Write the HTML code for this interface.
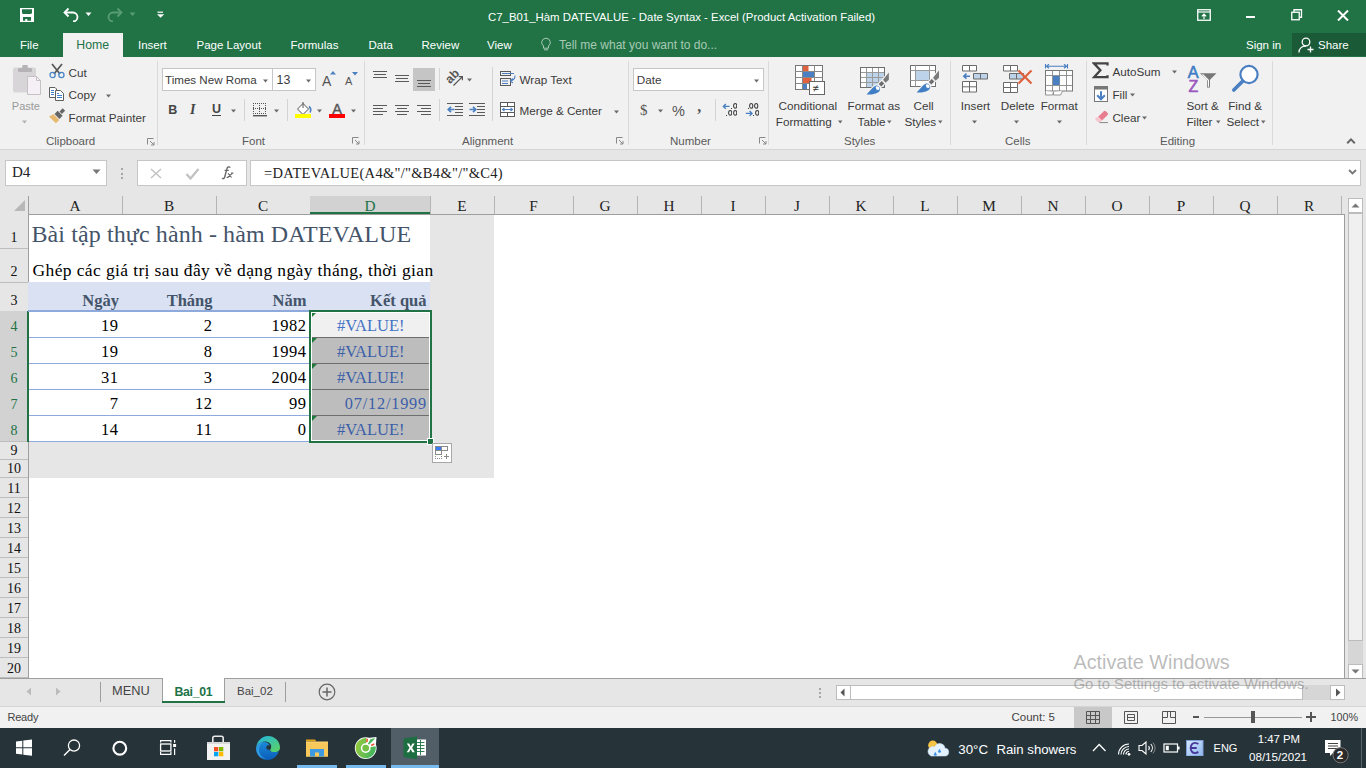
<!DOCTYPE html>
<html><head><meta charset="utf-8"><title>Excel</title>
<style>
html,body{margin:0;padding:0;width:1366px;height:768px;overflow:hidden;background:#fff;}
body{position:relative;font-family:'Liberation Sans', sans-serif;}
body>div,body>svg{position:absolute;box-sizing:border-box;}
.t{white-space:nowrap;line-height:1;}
</style></head><body>
<div style="left:0px;top:0px;width:1366px;height:57px;background:#217346"></div>
<div style="left:63px;top:33px;width:60px;height:24px;background:#f1f1f1"></div>
<div style="left:1292px;top:33px;width:74px;height:23px;background:#1a5a36"></div>
<svg style="left:20px;top:8px;" width="14" height="14" viewBox="0 0 14 14"><path fill-rule="evenodd" fill="#fff" d="M0 0h14v14H0z M2 1.3h10v3.6l-1 1H3l-1-1z M3 9h8v3.8H7.3v-1.9h-2v1.9H3z"/></svg>
<svg style="left:62px;top:6px;" width="18" height="16" viewBox="0 0 18 16"><path d="M3 6.5h8a4.5 4.5 0 0 1 0 9" fill="none" stroke="#fff" stroke-width="1.8"/><path d="M6.5 2.5L2.5 6.5 6.5 10.5" fill="none" stroke="#fff" stroke-width="1.8"/></svg>
<svg style="left:85px;top:12px;" width="8" height="5" viewBox="0 0 8 5"><path d="M0.5 0.5h6l-3 3.5z" fill="#fff"/></svg>
<svg style="left:106px;top:6px;" width="18" height="16" viewBox="0 0 18 16"><path d="M15 6.5H7a4.5 4.5 0 0 0 0 9" fill="none" stroke="#5a9c75" stroke-width="1.8"/><path d="M11.5 2.5l4 4-4 4" fill="none" stroke="#5a9c75" stroke-width="1.8"/></svg>
<svg style="left:129px;top:12px;" width="8" height="5" viewBox="0 0 8 5"><path d="M0.5 0.5h6l-3 3.5z" fill="#5a9c75"/></svg>
<svg style="left:156px;top:11px;" width="9" height="8" viewBox="0 0 9 8"><rect x="1.5" y="0.6" width="5.5" height="1.2" fill="#fff"/><path d="M1 3.2h7.2L4.6 6.8z" fill="#fff"/></svg>
<div class="t" style="left:488px;top:11.85px;font-size:11.4px;color:#fff;font-family:'Liberation Sans', sans-serif;font-weight:400;">C7_B01_Hàm DATEVALUE - Date Syntax - Excel (Product Activation Failed)</div>
<svg style="left:1197px;top:9px;" width="15" height="12" viewBox="0 0 15 12"><rect x="0.75" y="0.75" width="12.5" height="10.5" fill="none" stroke="#fff" stroke-width="1.3"/><path d="M1 3h12" stroke="#fff" stroke-width="1.2"/><path d="M7 10V5.2M4.8 7.3L7 5l2.2 2.3" fill="none" stroke="#fff" stroke-width="1.2"/></svg>
<div style="left:1246px;top:16px;width:9px;height:1.5px;background:#fff"></div>
<svg style="left:1291px;top:9px;" width="12" height="12" viewBox="0 0 12 12"><rect x="0.75" y="3.25" width="7.5" height="7.5" fill="none" stroke="#fff" stroke-width="1.3"/><path d="M3 3V0.75h7.5v7.5H8.5" fill="none" stroke="#fff" stroke-width="1.3"/></svg>
<svg style="left:1337px;top:10px;" width="12" height="11" viewBox="0 0 12 11"><path d="M1 0.5l10 10M11 0.5l-10 10" stroke="#fff" stroke-width="2"/></svg>
<div class="t" style="left:20px;top:40.27px;font-size:11.5px;color:#fff;font-family:'Liberation Sans', sans-serif;font-weight:400;">File</div>
<div class="t" style="left:138px;top:40.27px;font-size:11.5px;color:#fff;font-family:'Liberation Sans', sans-serif;font-weight:400;">Insert</div>
<div class="t" style="left:196.5px;top:40.27px;font-size:11.5px;color:#fff;font-family:'Liberation Sans', sans-serif;font-weight:400;">Page Layout</div>
<div class="t" style="left:290.5px;top:40.27px;font-size:11.5px;color:#fff;font-family:'Liberation Sans', sans-serif;font-weight:400;">Formulas</div>
<div class="t" style="left:368.5px;top:40.27px;font-size:11.5px;color:#fff;font-family:'Liberation Sans', sans-serif;font-weight:400;">Data</div>
<div class="t" style="left:421.5px;top:40.27px;font-size:11.5px;color:#fff;font-family:'Liberation Sans', sans-serif;font-weight:400;">Review</div>
<div class="t" style="left:487px;top:40.27px;font-size:11.5px;color:#fff;font-family:'Liberation Sans', sans-serif;font-weight:400;">View</div>
<div class="t" style="left:76.3px;top:39.49px;font-size:12.3px;color:#217346;font-family:'Liberation Sans', sans-serif;font-weight:400;">Home</div>
<svg style="left:540px;top:37px;" width="12" height="15" viewBox="0 0 12 15"><path d="M6 1.2a4.3 4.3 0 0 0-2.5 7.8v2.2h5V9A4.3 4.3 0 0 0 6 1.2z" fill="none" stroke="#a8c9b4" stroke-width="1"/><path d="M4 12.8h4" stroke="#a8c9b4"/></svg>
<div class="t" style="left:559px;top:39.34px;font-size:12px;color:#a8c9b4;font-family:'Liberation Sans', sans-serif;font-weight:400;">Tell me what you want to do...</div>
<div class="t" style="left:1246px;top:39.77px;font-size:11.5px;color:#fff;font-family:'Liberation Sans', sans-serif;font-weight:400;">Sign in</div>
<svg style="left:1298px;top:37px;" width="17" height="16" viewBox="0 0 17 16"><circle cx="8" cy="5" r="3.8" fill="none" stroke="#fff" stroke-width="1.3"/><path d="M1 15.5c0-4 3-6.5 7-6.5" fill="none" stroke="#fff" stroke-width="1.3"/><path d="M12.5 9.5v6M9.5 12.5h6" stroke="#fff" stroke-width="1.3"/></svg>
<div class="t" style="left:1318px;top:39.77px;font-size:11.5px;color:#fff;font-family:'Liberation Sans', sans-serif;font-weight:400;">Share</div>
<div style="left:0px;top:57px;width:1366px;height:93px;background:#f1f1f1"></div>
<div style="left:0px;top:149px;width:1366px;height:1px;background:#d5d5d5"></div>
<div style="left:157px;top:61px;width:1px;height:84px;background:#d9d9d9"></div>
<div style="left:364px;top:61px;width:1px;height:84px;background:#d9d9d9"></div>
<div style="left:628px;top:61px;width:1px;height:84px;background:#d9d9d9"></div>
<div style="left:768px;top:61px;width:1px;height:84px;background:#d9d9d9"></div>
<div style="left:950px;top:61px;width:1px;height:84px;background:#d9d9d9"></div>
<div style="left:1086px;top:61px;width:1px;height:84px;background:#d9d9d9"></div>
<div style="left:1272px;top:61px;width:1px;height:84px;background:#d9d9d9"></div>
<svg style="left:12px;top:64px;" width="30" height="32" viewBox="0 0 30 32"><path d="M1 5.5a2 2 0 0 1 2-2h19a2 2 0 0 1 2 2v23H3a2 2 0 0 1-2-2z" fill="#d8d5d9"/><rect x="6" y="4" width="14" height="4" rx="1" fill="#b6b3b6"/><rect x="10.3" y="1" width="5.5" height="4" rx="1" fill="#b6b3b6"/><path d="M15.5 12.5h9l4 4v14h-13z" fill="#f4f0f6" stroke="#c4c0c4"/><path d="M24.5 12.5v4h4" fill="none" stroke="#c4c0c4"/></svg>
<div class="t" style="left:11.8px;top:101.19px;font-size:11px;color:#9a9a9a;font-family:'Liberation Sans', sans-serif;font-weight:400;">Paste</div>
<svg style="left:21.5px;top:120px;" width="6" height="4" viewBox="0 0 6 4"><path d="M0 0.5h5l-2.5 3z" fill="#b0b0b0"/></svg>
<svg style="left:49px;top:63px;" width="16" height="16" viewBox="0 0 16 16"><path d="M3 1l8 10M13 1L5 11" stroke="#5a5a5a" stroke-width="1.8"/><circle cx="3.6" cy="12" r="2.6" fill="none" stroke="#4a86c8" stroke-width="1.3"/><circle cx="12.4" cy="12" r="2.6" fill="none" stroke="#4a86c8" stroke-width="1.3"/></svg>
<div class="t" style="left:68.5px;top:66.60px;font-size:11.7px;color:#3b3b3b;font-family:'Liberation Sans', sans-serif;font-weight:400;">Cut</div>
<svg style="left:48px;top:86px;" width="17" height="16" viewBox="0 0 17 16"><path d="M1.5 1.5H7L8.5 3v8.5h-7z" fill="#fff" stroke="#5f5f5f"/><path d="M7.5 4.5h5l3 3v7h-8z" fill="#fff" stroke="#5f5f5f"/><path d="M3 4.5h3M3 6.5h3M3 8.5h3M9 7.5h2M9 9.5h5M9 11.5h5" stroke="#3f7fcb"/></svg>
<div class="t" style="left:68.5px;top:88.90px;font-size:11.7px;color:#3b3b3b;font-family:'Liberation Sans', sans-serif;font-weight:400;">Copy</div>
<svg style="left:106px;top:93.5px;" width="6" height="4" viewBox="0 0 6 4"><path d="M0 0.5h5l-2.5 3z" fill="#6a6a6a"/></svg>
<svg style="left:48px;top:108px;" width="18" height="17" viewBox="0 0 18 17"><path d="M0.99 8.44L5.57 6.22 11.23 11.88 7.91 15.36z" fill="#e8b86e"/><path d="M6.5 6.01L11.44 10.95 14.62 7.77 9.68 2.83z" fill="#666"/><path d="M11.52 3.53L13.92 5.93 17.1 2.75 14.7 0.35z" fill="#666"/></svg>
<div class="t" style="left:68.5px;top:112.10px;font-size:11.7px;color:#3b3b3b;font-family:'Liberation Sans', sans-serif;font-weight:400;">Format Painter</div>
<svg style="left:147px;top:138px;" width="8" height="8" viewBox="0 0 8 8"><path d="M0.5 6.5v-6h6" fill="none" stroke="#888"/><path d="M3 3l4 4M7 4v3H4" fill="none" stroke="#888"/></svg>
<div style="left:162px;top:68px;width:111px;height:23px;background:#fff;border:1px solid #c6c6c6"></div>
<div class="t" style="left:165px;top:74.08px;font-size:11.6px;color:#3b3b3b;font-family:'Liberation Sans', sans-serif;font-weight:400;">Times New Roma</div>
<svg style="left:263px;top:78.5px;" width="6" height="4" viewBox="0 0 6 4"><path d="M0 0.5h5l-2.5 3z" fill="#6a6a6a"/></svg>
<div style="left:272px;top:68px;width:44px;height:23px;background:#fff;border:1px solid #c6c6c6"></div>
<div class="t" style="left:276.5px;top:74.00px;font-size:12.4px;color:#3b3b3b;font-family:'Liberation Sans', sans-serif;font-weight:400;">13</div>
<svg style="left:306px;top:78.5px;" width="6" height="4" viewBox="0 0 6 4"><path d="M0 0.5h5l-2.5 3z" fill="#6a6a6a"/></svg>
<div class="t" style="left:322px;top:73.65px;font-size:14px;color:#555;font-family:'Liberation Sans', sans-serif;font-weight:400;">A</div>
<svg style="left:329.5px;top:71px;" width="6" height="4" viewBox="0 0 6 4"><path d="M0 3.5L3 0l3 3.5z" fill="#4a7fc1"/></svg>
<div class="t" style="left:345px;top:76.19px;font-size:11px;color:#555;font-family:'Liberation Sans', sans-serif;font-weight:400;">A</div>
<svg style="left:351.5px;top:71.5px;" width="6" height="4" viewBox="0 0 6 4"><path d="M0 0h6L3 3.5z" fill="#4a7fc1"/></svg>
<div class="t" style="left:168.3px;top:103.92px;font-size:12.5px;color:#444;font-family:'Liberation Sans', sans-serif;font-weight:700;">B</div>
<div class="t" style="left:190px;top:102.98px;font-size:14px;color:#444;font-family:'Liberation Serif', serif;font-weight:700;font-style:italic">I</div>
<div class="t" style="left:212px;top:103.12px;font-size:12.5px;color:#444;font-family:'Liberation Sans', sans-serif;font-weight:700;">U</div>
<div style="left:212px;top:115px;width:9px;height:1.3px;background:#444"></div>
<svg style="left:230.5px;top:109px;" width="6" height="4" viewBox="0 0 6 4"><path d="M0 0.5h5l-2.5 3z" fill="#6a6a6a"/></svg>
<div style="left:244px;top:99px;width:1px;height:22px;background:#d4d4d4"></div>
<svg style="left:253px;top:103px;" width="14" height="14" viewBox="0 0 14 14"><rect x="0" y="0" width="1" height="1" fill="#555"/><rect x="0" y="2" width="1" height="1" fill="#555"/><rect x="0" y="4" width="1" height="1" fill="#555"/><rect x="0" y="5" width="1" height="1" fill="#555"/><rect x="0" y="6" width="1" height="1" fill="#555"/><rect x="0" y="8" width="1" height="1" fill="#555"/><rect x="0" y="10" width="1" height="1" fill="#555"/><rect x="2" y="0" width="1" height="1" fill="#555"/><rect x="2" y="5" width="1" height="1" fill="#555"/><rect x="2" y="10" width="1" height="1" fill="#555"/><rect x="4" y="0" width="1" height="1" fill="#555"/><rect x="4" y="5" width="1" height="1" fill="#555"/><rect x="4" y="10" width="1" height="1" fill="#555"/><rect x="6" y="0" width="1" height="1" fill="#555"/><rect x="6" y="2" width="1" height="1" fill="#555"/><rect x="6" y="4" width="1" height="1" fill="#555"/><rect x="6" y="5" width="1" height="1" fill="#555"/><rect x="6" y="6" width="1" height="1" fill="#555"/><rect x="6" y="8" width="1" height="1" fill="#555"/><rect x="6" y="10" width="1" height="1" fill="#555"/><rect x="8" y="0" width="1" height="1" fill="#555"/><rect x="8" y="5" width="1" height="1" fill="#555"/><rect x="8" y="10" width="1" height="1" fill="#555"/><rect x="10" y="0" width="1" height="1" fill="#555"/><rect x="10" y="5" width="1" height="1" fill="#555"/><rect x="10" y="10" width="1" height="1" fill="#555"/><rect x="12" y="0" width="1" height="1" fill="#555"/><rect x="12" y="2" width="1" height="1" fill="#555"/><rect x="12" y="4" width="1" height="1" fill="#555"/><rect x="12" y="5" width="1" height="1" fill="#555"/><rect x="12" y="6" width="1" height="1" fill="#555"/><rect x="12" y="8" width="1" height="1" fill="#555"/><rect x="12" y="10" width="1" height="1" fill="#555"/><rect x="0" y="12" width="14" height="1.4" fill="#555"/></svg>
<svg style="left:274px;top:109px;" width="6" height="4" viewBox="0 0 6 4"><path d="M0 0.5h5l-2.5 3z" fill="#6a6a6a"/></svg>
<div style="left:287px;top:99px;width:1px;height:22px;background:#d4d4d4"></div>
<svg style="left:294px;top:101px;" width="19" height="18" viewBox="0 0 19 18"><path d="M9 2.5l5.5 5.5-5.5 5.5-5.5-5.5z" fill="#fff" stroke="#555"/><path d="M9 1v6" stroke="#555"/><path d="M15 5.5c2 1.5 2 4 1 6" fill="none" stroke="#4a7fc1" stroke-width="1.6"/><rect x="1" y="13" width="16" height="4" fill="#ffff00"/></svg>
<svg style="left:317px;top:109px;" width="6" height="4" viewBox="0 0 6 4"><path d="M0 0.5h5l-2.5 3z" fill="#6a6a6a"/></svg>
<div class="t" style="left:332.3px;top:102.43px;font-size:14.5px;color:#555;font-family:'Liberation Sans', sans-serif;font-weight:400;-webkit-text-stroke:0.4px #555">A</div>
<div style="left:329px;top:114px;width:16px;height:4px;background:#ff0000"></div>
<svg style="left:351px;top:109px;" width="6" height="4" viewBox="0 0 6 4"><path d="M0 0.5h5l-2.5 3z" fill="#6a6a6a"/></svg>
<svg style="left:352px;top:137px;" width="8" height="8" viewBox="0 0 8 8"><path d="M0.5 6.5v-6h6" fill="none" stroke="#888"/><path d="M3 3l4 4M7 4v3H4" fill="none" stroke="#888"/></svg>
<div style="left:373px;top:71px;width:14px;height:1.2px;background:#5a5a5a"></div>
<div style="left:374.2px;top:74px;width:11.6px;height:1.2px;background:#5a5a5a"></div>
<div style="left:373px;top:77px;width:14px;height:1.2px;background:#5a5a5a"></div>
<div style="left:395px;top:75px;width:14px;height:1.2px;background:#5a5a5a"></div>
<div style="left:396.2px;top:78px;width:11.6px;height:1.2px;background:#5a5a5a"></div>
<div style="left:395px;top:81px;width:14px;height:1.2px;background:#5a5a5a"></div>
<div style="left:413px;top:68px;width:22px;height:23px;background:#c5c5c5"></div>
<div style="left:417px;top:80px;width:14px;height:1.2px;background:#5a5a5a"></div>
<div style="left:418.2px;top:83px;width:11.6px;height:1.2px;background:#5a5a5a"></div>
<div style="left:417px;top:86px;width:14px;height:1.2px;background:#5a5a5a"></div>
<div style="left:439px;top:68px;width:1px;height:22px;background:#d4d4d4"></div>
<svg style="left:446px;top:69px;" width="19" height="18" viewBox="0 0 19 18"><text x="0" y="0" transform="translate(4,15.2) rotate(-45)" font-family="Liberation Sans" font-size="12.3" font-weight="700" fill="#555">ab</text><path d="M7.5 16.5L16.2 7.8M12.8 7.6H16.4v3.6" fill="none" stroke="#555" stroke-width="1.2"/></svg>
<svg style="left:467px;top:77.8px;" width="6" height="4" viewBox="0 0 6 4"><path d="M0 0.5h5l-2.5 3z" fill="#6a6a6a"/></svg>
<div style="left:373px;top:105px;width:14px;height:1.2px;background:#5a5a5a"></div>
<div style="left:373px;top:108px;width:10px;height:1.2px;background:#5a5a5a"></div>
<div style="left:373px;top:111px;width:14px;height:1.2px;background:#5a5a5a"></div>
<div style="left:373px;top:114px;width:10px;height:1.2px;background:#5a5a5a"></div>
<div style="left:395px;top:105px;width:14px;height:1.2px;background:#5a5a5a"></div>
<div style="left:397px;top:108px;width:10px;height:1.2px;background:#5a5a5a"></div>
<div style="left:395px;top:111px;width:14px;height:1.2px;background:#5a5a5a"></div>
<div style="left:397px;top:114px;width:10px;height:1.2px;background:#5a5a5a"></div>
<div style="left:417px;top:105px;width:14px;height:1.2px;background:#5a5a5a"></div>
<div style="left:421px;top:108px;width:10px;height:1.2px;background:#5a5a5a"></div>
<div style="left:417px;top:111px;width:14px;height:1.2px;background:#5a5a5a"></div>
<div style="left:421px;top:114px;width:10px;height:1.2px;background:#5a5a5a"></div>
<div style="left:439px;top:99px;width:1px;height:22px;background:#d4d4d4"></div>
<div style="left:447px;top:103px;width:16px;height:1.2px;background:#5a5a5a"></div>
<div style="left:455px;top:106px;width:8px;height:1.2px;background:#5a5a5a"></div>
<div style="left:455px;top:109px;width:8px;height:1.2px;background:#5a5a5a"></div>
<div style="left:455px;top:112px;width:8px;height:1.2px;background:#5a5a5a"></div>
<div style="left:447px;top:115px;width:16px;height:1.2px;background:#5a5a5a"></div>
<svg style="left:447px;top:106px;" width="8" height="7" viewBox="0 0 8 7"><path d="M7.5 3.5H2M4 0.8L1.2 3.5 4 6.2" fill="none" stroke="#4a7fc1" stroke-width="1.7"/></svg>
<div style="left:469px;top:103px;width:16px;height:1.2px;background:#5a5a5a"></div>
<div style="left:477px;top:106px;width:8px;height:1.2px;background:#5a5a5a"></div>
<div style="left:477px;top:109px;width:8px;height:1.2px;background:#5a5a5a"></div>
<div style="left:477px;top:112px;width:8px;height:1.2px;background:#5a5a5a"></div>
<div style="left:469px;top:115px;width:16px;height:1.2px;background:#5a5a5a"></div>
<svg style="left:469px;top:106px;" width="8" height="7" viewBox="0 0 8 7"><path d="M0.5 3.5H6M4 0.8l2.8 2.7L4 6.2" fill="none" stroke="#4a7fc1" stroke-width="1.7"/></svg>
<div style="left:492px;top:67px;width:1px;height:54px;background:#d4d4d4"></div>
<svg style="left:499px;top:70px;" width="18" height="17" viewBox="0 0 18 17"><rect x="1.5" y="1.5" width="10" height="4" fill="none" stroke="#5a5a5a"/><path d="M3 3.5h12" stroke="#4a7fc1" stroke-width="1"/><rect x="1.5" y="8.5" width="10" height="7" fill="none" stroke="#5a5a5a"/><path d="M3 11h6M3 13.5h6" stroke="#4a7fc1" stroke-width="1"/><path d="M16 5.5c0 3-1.8 5-4.5 5.3M13.8 8.5l-2.3 2.3 2.3 2.2" fill="none" stroke="#4a7fc1" stroke-width="1.1"/></svg>
<div class="t" style="left:519.5px;top:74.30px;font-size:11.7px;color:#3b3b3b;font-family:'Liberation Sans', sans-serif;font-weight:400;">Wrap Text</div>
<svg style="left:499px;top:101px;" width="17" height="17" viewBox="0 0 17 17"><rect x="1.5" y="1.5" width="14" height="14" fill="#fff" stroke="#5a5a5a"/><path d="M1.5 5.5h14M1.5 11.5h14M8.5 1.5v4M8.5 11.5v4" stroke="#5a5a5a"/><path d="M3.5 8.5h10M5.5 6.8L3.5 8.5l2 1.7M11.5 6.8l2 1.7-2 1.7" fill="none" stroke="#4a7fc1" stroke-width="1.1"/></svg>
<div class="t" style="left:519.5px;top:105.00px;font-size:11.7px;color:#3b3b3b;font-family:'Liberation Sans', sans-serif;font-weight:400;">Merge &amp; Center</div>
<svg style="left:614px;top:109.5px;" width="6" height="4" viewBox="0 0 6 4"><path d="M0 0.5h5l-2.5 3z" fill="#6a6a6a"/></svg>
<svg style="left:616px;top:137px;" width="8" height="8" viewBox="0 0 8 8"><path d="M0.5 6.5v-6h6" fill="none" stroke="#888"/><path d="M3 3l4 4M7 4v3H4" fill="none" stroke="#888"/></svg>
<div style="left:633px;top:68px;width:131px;height:23px;background:#fff;border:1px solid #c6c6c6"></div>
<div class="t" style="left:636.7px;top:74.30px;font-size:11.7px;color:#3b3b3b;font-family:'Liberation Sans', sans-serif;font-weight:400;">Date</div>
<svg style="left:754px;top:78.5px;" width="6" height="4" viewBox="0 0 6 4"><path d="M0 0.5h5l-2.5 3z" fill="#6a6a6a"/></svg>
<div class="t" style="left:640px;top:103.44px;font-size:15px;color:#555;font-family:'Liberation Serif', serif;font-weight:400;">$</div>
<svg style="left:658px;top:109px;" width="6" height="4" viewBox="0 0 6 4"><path d="M0 0.5h5l-2.5 3z" fill="#6a6a6a"/></svg>
<div class="t" style="left:672px;top:104.03px;font-size:14.5px;color:#555;font-family:'Liberation Sans', sans-serif;font-weight:400;">%</div>
<div class="t" style="left:697.3px;top:98.60px;font-size:16px;color:#555;font-family:'Liberation Serif', serif;font-weight:700;">,</div>
<div style="left:715px;top:99px;width:1px;height:22px;background:#d4d4d4"></div>
<svg style="left:722px;top:103px;" width="9" height="7" viewBox="0 0 9 7"><path d="M7.5 3.4H1.5M3.8 1.1L1.4 3.4l2.4 2.3" fill="none" stroke="#4a7fc1" stroke-width="1.4"/></svg>
<div style="left:731px;top:107.7px;width:1.2px;height:1.2px;background:#444"></div>
<svg style="left:732.6px;top:103.10000000000001px;" width="4.4" height="6" viewBox="0 0 4.4 6"><ellipse cx="2.2" cy="2.9" rx="1.6" ry="2.35" fill="none" stroke="#444" stroke-width="1.1"/></svg>
<div style="left:726px;top:114.7px;width:1.2px;height:1.2px;background:#444"></div>
<svg style="left:727.6px;top:110.10000000000001px;" width="4.4" height="6" viewBox="0 0 4.4 6"><ellipse cx="2.2" cy="2.9" rx="1.6" ry="2.35" fill="none" stroke="#444" stroke-width="1.1"/></svg>
<svg style="left:732.8000000000001px;top:110.10000000000001px;" width="4.4" height="6" viewBox="0 0 4.4 6"><ellipse cx="2.2" cy="2.9" rx="1.6" ry="2.35" fill="none" stroke="#444" stroke-width="1.1"/></svg>
<div style="left:747.6px;top:107.7px;width:1.2px;height:1.2px;background:#444"></div>
<svg style="left:749.2px;top:103.10000000000001px;" width="4.4" height="6" viewBox="0 0 4.4 6"><ellipse cx="2.2" cy="2.9" rx="1.6" ry="2.35" fill="none" stroke="#444" stroke-width="1.1"/></svg>
<svg style="left:754.4000000000001px;top:103.10000000000001px;" width="4.4" height="6" viewBox="0 0 4.4 6"><ellipse cx="2.2" cy="2.9" rx="1.6" ry="2.35" fill="none" stroke="#444" stroke-width="1.1"/></svg>
<svg style="left:744.5px;top:109.8px;" width="9" height="7" viewBox="0 0 9 7"><path d="M0.8 3.4h6M4.6 1.1l2.4 2.3-2.4 2.3" fill="none" stroke="#4a7fc1" stroke-width="1.4"/></svg>
<div style="left:753px;top:114.7px;width:1.2px;height:1.2px;background:#444"></div>
<svg style="left:754.6px;top:110.10000000000001px;" width="4.4" height="6" viewBox="0 0 4.4 6"><ellipse cx="2.2" cy="2.9" rx="1.6" ry="2.35" fill="none" stroke="#444" stroke-width="1.1"/></svg>
<svg style="left:759px;top:137px;" width="8" height="8" viewBox="0 0 8 8"><path d="M0.5 6.5v-6h6" fill="none" stroke="#888"/><path d="M3 3l4 4M7 4v3H4" fill="none" stroke="#888"/></svg>
<svg style="left:794px;top:64px;" width="32" height="32" viewBox="0 0 32 32"><rect x="1.5" y="1.5" width="27" height="24" fill="#fff" stroke="#777"/><path d="M1.5 7.5h27M1.5 13.5h27M1.5 19.5h27M8.5 1.5v24M20.5 1.5v24" stroke="#888"/><rect x="9" y="2" width="5.5" height="5" fill="#e0613d"/><rect x="9" y="8" width="11" height="5" fill="#4a7fc1"/><rect x="9" y="14" width="8.5" height="5" fill="#e0613d"/><rect x="9" y="20" width="4" height="5" fill="#4a7fc1"/><rect x="15.5" y="17.5" width="15" height="13" fill="#fff" stroke="#666"/><text x="18.5" y="28" font-family="Liberation Sans" font-size="11" fill="#333">≠</text></svg>
<div class="t" style="left:778.6px;top:100.40px;font-size:11.7px;color:#3b3b3b;font-family:'Liberation Sans', sans-serif;font-weight:400;">Conditional</div>
<div class="t" style="left:775.8px;top:116.20px;font-size:11.7px;color:#3b3b3b;font-family:'Liberation Sans', sans-serif;font-weight:400;">Formatting</div>
<svg style="left:838px;top:120px;" width="5.5" height="4" viewBox="0 0 5.5 4"><path d="M0 0.5h4.5l-2.25 3z" fill="#6a6a6a"/></svg>
<svg style="left:859px;top:66px;" width="32" height="32" viewBox="0 0 32 32"><rect x="1.5" y="1.5" width="24" height="20" fill="#fff" stroke="#777"/><rect x="7" y="7" width="18" height="14" fill="#bcd3ea"/><path d="M1.5 6.5h24M1.5 11.5h24M1.5 16.5h24M7.5 1.5v20M13.5 1.5v20M19.5 1.5v20" stroke="#999" stroke-width="1"/><rect x="1.5" y="1.5" width="24" height="20" fill="none" stroke="#6f6f6f"/><g transform="translate(17.7,23)"><path d="M-10.2 5.6C-7 2.5-4-1.5-2.4-2.4A3.4 3.4 0 0 1 2.4 2.4C0.5 4.5-5 5.8-10.2 5.6Z M2 -5L5 -8 7.5 -5.5 4.5 -2.5Z M6.3 -9.3L12.2 -16.5V-9.2L8.8 -6.2Z" fill="#f1f1f1" stroke="#f1f1f1" stroke-width="2.4" stroke-linejoin="round"/><path d="M-10.2 5.6C-7 2.5-4-1.5-2.4-2.4A3.4 3.4 0 0 1 2.4 2.4C0.5 4.5-5 5.8-10.2 5.6Z" fill="#3f7dc4"/><path d="M-1.2 -2.3A2.5 2.5 0 0 1 2.2 1.3L0.9 0.5 0.2 1.4Z" fill="#fff"/><path d="M2 -5L5 -8 7.5 -5.5 4.5 -2.5Z" fill="#6d6d6d"/><path d="M6.3 -9.3L12.2 -16.5V-9.2L8.8 -6.2Z" fill="#7a7a7a"/></g></svg>
<div class="t" style="left:847.5px;top:100.40px;font-size:11.7px;color:#3b3b3b;font-family:'Liberation Sans', sans-serif;font-weight:400;">Format as</div>
<div class="t" style="left:857.6px;top:116.20px;font-size:11.7px;color:#3b3b3b;font-family:'Liberation Sans', sans-serif;font-weight:400;">Table</div>
<svg style="left:886.5px;top:120px;" width="5.5" height="4" viewBox="0 0 5.5 4"><path d="M0 0.5h4.5l-2.25 3z" fill="#6a6a6a"/></svg>
<svg style="left:909px;top:64px;" width="32" height="32" viewBox="0 0 32 32"><rect x="1.5" y="1.5" width="25" height="21" fill="#fff" stroke="#6f6f6f"/><path d="M1.5 6.5h25M1.5 16.5h25M6.5 1.5v21M20.5 1.5v21" stroke="#999" stroke-width="1"/><rect x="7" y="7" width="13" height="9" fill="#bcd3ea"/><g transform="translate(17.8,23)"><path d="M-10.2 5.6C-7 2.5-4-1.5-2.4-2.4A3.4 3.4 0 0 1 2.4 2.4C0.5 4.5-5 5.8-10.2 5.6Z M2 -5L5 -8 7.5 -5.5 4.5 -2.5Z M6.3 -9.3L12.2 -16.5V-9.2L8.8 -6.2Z" fill="#f1f1f1" stroke="#f1f1f1" stroke-width="2.4" stroke-linejoin="round"/><path d="M-10.2 5.6C-7 2.5-4-1.5-2.4-2.4A3.4 3.4 0 0 1 2.4 2.4C0.5 4.5-5 5.8-10.2 5.6Z" fill="#3f7dc4"/><path d="M-1.2 -2.3A2.5 2.5 0 0 1 2.2 1.3L0.9 0.5 0.2 1.4Z" fill="#fff"/><path d="M2 -5L5 -8 7.5 -5.5 4.5 -2.5Z" fill="#6d6d6d"/><path d="M6.3 -9.3L12.2 -16.5V-9.2L8.8 -6.2Z" fill="#7a7a7a"/></g></svg>
<div class="t" style="left:913.5px;top:100.40px;font-size:11.7px;color:#3b3b3b;font-family:'Liberation Sans', sans-serif;font-weight:400;">Cell</div>
<div class="t" style="left:904.4px;top:116.20px;font-size:11.7px;color:#3b3b3b;font-family:'Liberation Sans', sans-serif;font-weight:400;">Styles</div>
<svg style="left:937.5px;top:120px;" width="5.5" height="4" viewBox="0 0 5.5 4"><path d="M0 0.5h4.5l-2.25 3z" fill="#6a6a6a"/></svg>
<svg style="left:961px;top:64px;" width="28" height="30" viewBox="0 0 28 30"><path d="M1.5 1.5h14v5.5h-14zM8.5 1.5v5.5" fill="#fff" stroke="#6a6a6a"/><path d="M12.5 9.5h14v5.5h-14zM19.5 9.5v5.5" fill="#bcd3ea" stroke="#6a6a6a"/><path d="M9 12.2H3M5.5 9.7L2.8 12.2l2.7 2.5" fill="none" stroke="#4a7fc1" stroke-width="1.6"/><path d="M1.5 17.5h14v10.5h-14zM1.5 22.8h14M8.5 17.5v10.5" fill="#fff" stroke="#6a6a6a"/></svg>
<div class="t" style="left:960.8px;top:99.90px;font-size:11.7px;color:#3b3b3b;font-family:'Liberation Sans', sans-serif;font-weight:400;">Insert</div>
<svg style="left:972px;top:120px;" width="6" height="4" viewBox="0 0 6 4"><path d="M0 0.5h5l-2.5 3z" fill="#6a6a6a"/></svg>
<svg style="left:1002px;top:64px;" width="32" height="30" viewBox="0 0 32 30"><path d="M1.5 1.5h14v5.5h-14zM8.5 1.5v5.5" fill="#fff" stroke="#6a6a6a"/><path d="M7.5 9.5h14v5.5h-14zM14.5 9.5v5.5" fill="#bcd3ea" stroke="#6a6a6a"/><path d="M1.5 18.5h14v10h-14zM1.5 23.5h14M8.5 18.5v10" fill="#fff" stroke="#6a6a6a"/><path d="M16.5 6.5l13 13M29.5 6.5l-13 13" stroke="#e0613d" stroke-width="2.2"/></svg>
<div class="t" style="left:1000.7px;top:99.90px;font-size:11.7px;color:#3b3b3b;font-family:'Liberation Sans', sans-serif;font-weight:400;">Delete</div>
<svg style="left:1014px;top:120px;" width="6" height="4" viewBox="0 0 6 4"><path d="M0 0.5h5l-2.5 3z" fill="#6a6a6a"/></svg>
<svg style="left:1044px;top:63px;" width="31" height="33" viewBox="0 0 31 33"><path d="M1.5 1v4.5M23.5 1v4.5M2 3.3h21M5 1.3L2.5 3.3 5 5.3M20 1.3l2.5 2L20 5.3" fill="none" stroke="#4a7fc1" stroke-width="1.1"/><rect x="1.5" y="7.5" width="27" height="20.5" fill="#fff" stroke="#777"/><path d="M1.5 12.5h27M1.5 22.5h27M8.5 7.5v20.5M15.5 7.5v20.5M22.5 7.5v20.5" stroke="#888" stroke-width="0.9"/><rect x="9" y="13" width="6.5" height="9" fill="#4a7fc1"/><path d="M1.5 28v4h7l1-3M9.5 29v3h7l2-4" fill="#fff" stroke="#888" stroke-width="0.9"/></svg>
<div class="t" style="left:1040.7px;top:99.90px;font-size:11.7px;color:#3b3b3b;font-family:'Liberation Sans', sans-serif;font-weight:400;">Format</div>
<svg style="left:1057px;top:120px;" width="6" height="4" viewBox="0 0 6 4"><path d="M0 0.5h5l-2.5 3z" fill="#6a6a6a"/></svg>
<svg style="left:1092px;top:62px;" width="17" height="17" viewBox="0 0 17 17"><path d="M15.5 3.4V1.4H2l6.4 6.9L2 15.2h13.5v-2" fill="none" stroke="#444" stroke-width="2.3" stroke-linejoin="miter"/></svg>
<div class="t" style="left:1112.4px;top:66.20px;font-size:11.7px;color:#3b3b3b;font-family:'Liberation Sans', sans-serif;font-weight:400;">AutoSum</div>
<svg style="left:1172px;top:70px;" width="6" height="4" viewBox="0 0 6 4"><path d="M0 0.5h5l-2.5 3z" fill="#6a6a6a"/></svg>
<svg style="left:1093px;top:85px;" width="16" height="18" viewBox="0 0 16 18"><rect x="1.5" y="1.5" width="13" height="15" fill="#fff" stroke="#777"/><rect x="1" y="1" width="14" height="3.5" fill="#777"/><path d="M8 6.3v7.2" stroke="#4a7fc1" stroke-width="2"/><path d="M4.2 10.2L8 14.2l3.8-4" fill="none" stroke="#4a7fc1" stroke-width="2"/></svg>
<div class="t" style="left:1112.4px;top:88.90px;font-size:11.7px;color:#3b3b3b;font-family:'Liberation Sans', sans-serif;font-weight:400;">Fill</div>
<svg style="left:1130px;top:93px;" width="6" height="4" viewBox="0 0 6 4"><path d="M0 0.5h5l-2.5 3z" fill="#6a6a6a"/></svg>
<svg style="left:1093px;top:109px;" width="16" height="15" viewBox="0 0 16 15"><path d="M5.2 7.8l5.6-5.6a1.4 1.4 0 0 1 2 0l1.8 1.8a1.4 1.4 0 0 1 0 2L9 11.6z" fill="#e77d8f"/><path d="M5.2 7.8L9 11.6l-1.6 1.6H5.1L2.6 10.7a1.2 1.2 0 0 1 0-1.7z" fill="#f5c6ce"/><path d="M6.5 13.6h8.5" stroke="#888" stroke-width="1"/></svg>
<div class="t" style="left:1112.4px;top:111.60px;font-size:11.7px;color:#3b3b3b;font-family:'Liberation Sans', sans-serif;font-weight:400;">Clear</div>
<svg style="left:1142.3px;top:116px;" width="6" height="4" viewBox="0 0 6 4"><path d="M0 0.5h5l-2.5 3z" fill="#6a6a6a"/></svg>
<div class="t" style="left:1187.8px;top:63.50px;font-size:16.3px;color:#3f7cc4;font-family:'Liberation Sans', sans-serif;font-weight:400;-webkit-text-stroke:0.6px #3f7cc4">A</div>
<div class="t" style="left:1188.6px;top:78.56px;font-size:16px;color:#9b59c0;font-family:'Liberation Sans', sans-serif;font-weight:400;-webkit-text-stroke:0.6px #9b59c0">Z</div>
<svg style="left:1199px;top:72px;" width="19" height="17" viewBox="0 0 19 17"><path d="M1 1.2h16.5L11 7.8v7.8H8V7.8z" fill="#777"/><path d="M3.5 2.4L9.4 8.2v6.6" fill="none" stroke="#fff" stroke-width="1.2"/></svg>
<div class="t" style="left:1186.4px;top:100.40px;font-size:11.7px;color:#3b3b3b;font-family:'Liberation Sans', sans-serif;font-weight:400;">Sort &amp;</div>
<div class="t" style="left:1186.4px;top:116.20px;font-size:11.7px;color:#3b3b3b;font-family:'Liberation Sans', sans-serif;font-weight:400;">Filter</div>
<svg style="left:1215.5px;top:120px;" width="5.5" height="4" viewBox="0 0 5.5 4"><path d="M0 0.5h4.5l-2.25 3z" fill="#6a6a6a"/></svg>
<svg style="left:1230px;top:62px;" width="32" height="32" viewBox="0 0 32 32"><circle cx="19" cy="12.5" r="8.6" fill="#fff" stroke="#4a7fc1" stroke-width="2.2"/><path d="M12.6 19.2L3.8 28" stroke="#4a7fc1" stroke-width="3.6" stroke-linecap="round"/></svg>
<div class="t" style="left:1228.2px;top:100.40px;font-size:11.7px;color:#3b3b3b;font-family:'Liberation Sans', sans-serif;font-weight:400;">Find &amp;</div>
<div class="t" style="left:1226.5px;top:116.20px;font-size:11.7px;color:#3b3b3b;font-family:'Liberation Sans', sans-serif;font-weight:400;">Select</div>
<svg style="left:1260.6px;top:120px;" width="5.5" height="4" viewBox="0 0 5.5 4"><path d="M0 0.5h4.5l-2.25 3z" fill="#6a6a6a"/></svg>
<svg style="left:1346px;top:137px;" width="10" height="8" viewBox="0 0 10 8"><path d="M1.2 6.2L5 2.4l3.8 3.8" fill="none" stroke="#666" stroke-width="2"/></svg>
<div class="t" style="left:46px;top:135.77px;font-size:11.5px;color:#5a5a5a;font-family:'Liberation Sans', sans-serif;font-weight:400;">Clipboard</div>
<div class="t" style="left:242px;top:135.77px;font-size:11.5px;color:#5a5a5a;font-family:'Liberation Sans', sans-serif;font-weight:400;">Font</div>
<div class="t" style="left:462px;top:135.77px;font-size:11.5px;color:#5a5a5a;font-family:'Liberation Sans', sans-serif;font-weight:400;">Alignment</div>
<div class="t" style="left:670px;top:135.77px;font-size:11.5px;color:#5a5a5a;font-family:'Liberation Sans', sans-serif;font-weight:400;">Number</div>
<div class="t" style="left:844px;top:135.77px;font-size:11.5px;color:#5a5a5a;font-family:'Liberation Sans', sans-serif;font-weight:400;">Styles</div>
<div class="t" style="left:1005px;top:135.77px;font-size:11.5px;color:#5a5a5a;font-family:'Liberation Sans', sans-serif;font-weight:400;">Cells</div>
<div class="t" style="left:1160px;top:135.77px;font-size:11.5px;color:#5a5a5a;font-family:'Liberation Sans', sans-serif;font-weight:400;">Editing</div>
<div style="left:0px;top:150px;width:1366px;height:46px;background:#e6e6e6"></div>
<div style="left:5px;top:160px;width:102px;height:26px;background:#fff;border:1px solid #c6c6c6"></div>
<div class="t" style="left:12px;top:164.94px;font-size:15px;color:#222;font-family:'Liberation Serif', serif;font-weight:400;">D4</div>
<svg style="left:92px;top:169px;" width="9" height="6" viewBox="0 0 9 6"><path d="M0.5 0.5h8l-4 4.5z" fill="#777"/></svg>
<div style="left:121px;top:168px;width:2px;height:2px;background:#a6a6a6"></div>
<div style="left:121px;top:172.5px;width:2px;height:2px;background:#a6a6a6"></div>
<div style="left:121px;top:177px;width:2px;height:2px;background:#a6a6a6"></div>
<div style="left:137px;top:160px;width:110px;height:26px;background:#fff;border:1px solid #c6c6c6"></div>
<svg style="left:150px;top:168px;" width="12" height="11" viewBox="0 0 12 11"><path d="M1 1l10 9M11 1l-10 9" stroke="#c2c2c2" stroke-width="1.4"/></svg>
<svg style="left:185px;top:167px;" width="15" height="13" viewBox="0 0 15 13"><path d="M1.5 7l4 4.5 8-9.5" fill="none" stroke="#c2c2c2" stroke-width="2.3"/></svg>
<svg style="left:220px;top:165px;" width="16" height="15" viewBox="0 0 16 15"><path d="M10.2 2.6C9.6 1.7 8 1.5 7.2 2.9L4.6 12.3C4.1 13.8 2.9 14.1 2 13.1" fill="none" stroke="#666" stroke-width="1.4"/><path d="M4.6 5.4h4.2" stroke="#666" stroke-width="1.2"/><path d="M8 8.3l3.6 4.2M12.6 8.1L7.4 12.5M11.1 8.1h2.2M6.6 12.5h2" fill="none" stroke="#666" stroke-width="1.1"/></svg>
<div style="left:250px;top:160px;width:1111px;height:26px;background:#fff;border:1px solid #c6c6c6"></div>
<div class="t" style="left:264px;top:166.36px;font-size:14.5px;color:#222;font-family:'Liberation Serif', serif;font-weight:400;letter-spacing:0.3px">=DATEVALUE(A4&amp;&quot;/&quot;&amp;B4&amp;&quot;/&quot;&amp;C4)</div>
<svg style="left:1348px;top:169px;" width="9" height="7" viewBox="0 0 9 7"><path d="M1 1l3.5 3.5L8 1" fill="none" stroke="#777" stroke-width="1.8"/></svg>
<div style="left:0px;top:196px;width:1346px;height:18px;background:#e6e6e6"></div>
<div style="left:0px;top:214px;width:1345px;height:1px;background:#9e9e9e"></div>
<div class="t" style="left:-225.0px;width:600px;text-align:center;top:198.49px;font-size:15.3px;color:#222;font-family:'Liberation Serif', serif;font-weight:400;">A</div>
<div style="left:122px;top:196px;width:1px;height:18px;background:#b4b4b4"></div>
<div class="t" style="left:-131.0px;width:600px;text-align:center;top:198.49px;font-size:15.3px;color:#222;font-family:'Liberation Serif', serif;font-weight:400;">B</div>
<div style="left:216px;top:196px;width:1px;height:18px;background:#b4b4b4"></div>
<div class="t" style="left:-37.0px;width:600px;text-align:center;top:198.49px;font-size:15.3px;color:#222;font-family:'Liberation Serif', serif;font-weight:400;">C</div>
<div style="left:310px;top:196px;width:1px;height:18px;background:#b4b4b4"></div>
<div style="left:310px;top:196px;width:120px;height:18px;background:#d2d2d2"></div>
<div style="left:310px;top:212px;width:120px;height:2px;background:#217346"></div>
<div class="t" style="left:70.0px;width:600px;text-align:center;top:198.49px;font-size:15.3px;color:#217346;font-family:'Liberation Serif', serif;font-weight:400;">D</div>
<div style="left:430px;top:196px;width:1px;height:18px;background:#b4b4b4"></div>
<div class="t" style="left:162.0px;width:600px;text-align:center;top:198.49px;font-size:15.3px;color:#222;font-family:'Liberation Serif', serif;font-weight:400;">E</div>
<div style="left:494px;top:196px;width:1px;height:18px;background:#b4b4b4"></div>
<div class="t" style="left:233.5px;width:600px;text-align:center;top:198.49px;font-size:15.3px;color:#222;font-family:'Liberation Serif', serif;font-weight:400;">F</div>
<div style="left:573px;top:196px;width:1px;height:18px;background:#b4b4b4"></div>
<div class="t" style="left:305.0px;width:600px;text-align:center;top:198.49px;font-size:15.3px;color:#222;font-family:'Liberation Serif', serif;font-weight:400;">G</div>
<div style="left:637px;top:196px;width:1px;height:18px;background:#b4b4b4"></div>
<div class="t" style="left:369.0px;width:600px;text-align:center;top:198.49px;font-size:15.3px;color:#222;font-family:'Liberation Serif', serif;font-weight:400;">H</div>
<div style="left:701px;top:196px;width:1px;height:18px;background:#b4b4b4"></div>
<div class="t" style="left:433.0px;width:600px;text-align:center;top:198.49px;font-size:15.3px;color:#222;font-family:'Liberation Serif', serif;font-weight:400;">I</div>
<div style="left:765px;top:196px;width:1px;height:18px;background:#b4b4b4"></div>
<div class="t" style="left:497.0px;width:600px;text-align:center;top:198.49px;font-size:15.3px;color:#222;font-family:'Liberation Serif', serif;font-weight:400;">J</div>
<div style="left:829px;top:196px;width:1px;height:18px;background:#b4b4b4"></div>
<div class="t" style="left:561.0px;width:600px;text-align:center;top:198.49px;font-size:15.3px;color:#222;font-family:'Liberation Serif', serif;font-weight:400;">K</div>
<div style="left:893px;top:196px;width:1px;height:18px;background:#b4b4b4"></div>
<div class="t" style="left:625.0px;width:600px;text-align:center;top:198.49px;font-size:15.3px;color:#222;font-family:'Liberation Serif', serif;font-weight:400;">L</div>
<div style="left:957px;top:196px;width:1px;height:18px;background:#b4b4b4"></div>
<div class="t" style="left:689.0px;width:600px;text-align:center;top:198.49px;font-size:15.3px;color:#222;font-family:'Liberation Serif', serif;font-weight:400;">M</div>
<div style="left:1021px;top:196px;width:1px;height:18px;background:#b4b4b4"></div>
<div class="t" style="left:753.0px;width:600px;text-align:center;top:198.49px;font-size:15.3px;color:#222;font-family:'Liberation Serif', serif;font-weight:400;">N</div>
<div style="left:1085px;top:196px;width:1px;height:18px;background:#b4b4b4"></div>
<div class="t" style="left:817.0px;width:600px;text-align:center;top:198.49px;font-size:15.3px;color:#222;font-family:'Liberation Serif', serif;font-weight:400;">O</div>
<div style="left:1149px;top:196px;width:1px;height:18px;background:#b4b4b4"></div>
<div class="t" style="left:881.0px;width:600px;text-align:center;top:198.49px;font-size:15.3px;color:#222;font-family:'Liberation Serif', serif;font-weight:400;">P</div>
<div style="left:1213px;top:196px;width:1px;height:18px;background:#b4b4b4"></div>
<div class="t" style="left:945.0px;width:600px;text-align:center;top:198.49px;font-size:15.3px;color:#222;font-family:'Liberation Serif', serif;font-weight:400;">Q</div>
<div style="left:1277px;top:196px;width:1px;height:18px;background:#b4b4b4"></div>
<div class="t" style="left:1009.0px;width:600px;text-align:center;top:198.49px;font-size:15.3px;color:#222;font-family:'Liberation Serif', serif;font-weight:400;">R</div>
<div style="left:1341px;top:196px;width:1px;height:18px;background:#b4b4b4"></div>
<svg style="left:13px;top:199px;" width="13" height="13" viewBox="0 0 13 13"><path d="M12 1v11H1z" fill="#b8b8b8"/></svg>
<div style="left:0px;top:214px;width:28px;height:464px;background:#e6e6e6"></div>
<div class="t" style="left:-286px;width:600px;text-align:center;top:231.28px;font-size:14px;color:#111;font-family:'Liberation Serif', serif;font-weight:400;">1</div>
<div style="left:0px;top:248px;width:28px;height:1px;background:#bdbdbd"></div>
<div class="t" style="left:-286px;width:600px;text-align:center;top:265.27px;font-size:14px;color:#111;font-family:'Liberation Serif', serif;font-weight:400;">2</div>
<div style="left:0px;top:282px;width:28px;height:1px;background:#bdbdbd"></div>
<div class="t" style="left:-286px;width:600px;text-align:center;top:294.27px;font-size:14px;color:#111;font-family:'Liberation Serif', serif;font-weight:400;">3</div>
<div style="left:0px;top:311px;width:28px;height:1px;background:#bdbdbd"></div>
<div style="left:0px;top:311px;width:28px;height:26px;background:#d2d2d2"></div>
<div class="t" style="left:-286px;width:600px;text-align:center;top:319.77px;font-size:14px;color:#217346;font-family:'Liberation Serif', serif;font-weight:400;">4</div>
<div style="left:0px;top:337px;width:28px;height:1px;background:#bdbdbd"></div>
<div style="left:0px;top:337px;width:28px;height:26px;background:#d2d2d2"></div>
<div class="t" style="left:-286px;width:600px;text-align:center;top:345.77px;font-size:14px;color:#217346;font-family:'Liberation Serif', serif;font-weight:400;">5</div>
<div style="left:0px;top:363px;width:28px;height:1px;background:#bdbdbd"></div>
<div style="left:0px;top:363px;width:28px;height:26px;background:#d2d2d2"></div>
<div class="t" style="left:-286px;width:600px;text-align:center;top:371.77px;font-size:14px;color:#217346;font-family:'Liberation Serif', serif;font-weight:400;">6</div>
<div style="left:0px;top:389px;width:28px;height:1px;background:#bdbdbd"></div>
<div style="left:0px;top:389px;width:28px;height:26px;background:#d2d2d2"></div>
<div class="t" style="left:-286px;width:600px;text-align:center;top:397.77px;font-size:14px;color:#217346;font-family:'Liberation Serif', serif;font-weight:400;">7</div>
<div style="left:0px;top:415px;width:28px;height:1px;background:#bdbdbd"></div>
<div style="left:0px;top:415px;width:28px;height:26px;background:#d2d2d2"></div>
<div class="t" style="left:-286px;width:600px;text-align:center;top:423.77px;font-size:14px;color:#217346;font-family:'Liberation Serif', serif;font-weight:400;">8</div>
<div style="left:0px;top:441px;width:28px;height:1px;background:#bdbdbd"></div>
<div class="t" style="left:-286px;width:600px;text-align:center;top:444.07px;font-size:14px;color:#111;font-family:'Liberation Serif', serif;font-weight:400;">9</div>
<div style="left:0px;top:459px;width:28px;height:1px;background:#bdbdbd"></div>
<div class="t" style="left:-286px;width:600px;text-align:center;top:462.07px;font-size:14px;color:#111;font-family:'Liberation Serif', serif;font-weight:400;">10</div>
<div style="left:0px;top:477px;width:28px;height:1px;background:#bdbdbd"></div>
<div class="t" style="left:-286px;width:600px;text-align:center;top:482.07px;font-size:14px;color:#111;font-family:'Liberation Serif', serif;font-weight:400;">11</div>
<div style="left:0px;top:497px;width:28px;height:1px;background:#bdbdbd"></div>
<div class="t" style="left:-286px;width:600px;text-align:center;top:502.07px;font-size:14px;color:#111;font-family:'Liberation Serif', serif;font-weight:400;">12</div>
<div style="left:0px;top:517px;width:28px;height:1px;background:#bdbdbd"></div>
<div class="t" style="left:-286px;width:600px;text-align:center;top:522.07px;font-size:14px;color:#111;font-family:'Liberation Serif', serif;font-weight:400;">13</div>
<div style="left:0px;top:537px;width:28px;height:1px;background:#bdbdbd"></div>
<div class="t" style="left:-286px;width:600px;text-align:center;top:542.07px;font-size:14px;color:#111;font-family:'Liberation Serif', serif;font-weight:400;">14</div>
<div style="left:0px;top:557px;width:28px;height:1px;background:#bdbdbd"></div>
<div class="t" style="left:-286px;width:600px;text-align:center;top:562.07px;font-size:14px;color:#111;font-family:'Liberation Serif', serif;font-weight:400;">15</div>
<div style="left:0px;top:577px;width:28px;height:1px;background:#bdbdbd"></div>
<div class="t" style="left:-286px;width:600px;text-align:center;top:582.07px;font-size:14px;color:#111;font-family:'Liberation Serif', serif;font-weight:400;">16</div>
<div style="left:0px;top:597px;width:28px;height:1px;background:#bdbdbd"></div>
<div class="t" style="left:-286px;width:600px;text-align:center;top:602.07px;font-size:14px;color:#111;font-family:'Liberation Serif', serif;font-weight:400;">17</div>
<div style="left:0px;top:617px;width:28px;height:1px;background:#bdbdbd"></div>
<div class="t" style="left:-286px;width:600px;text-align:center;top:622.07px;font-size:14px;color:#111;font-family:'Liberation Serif', serif;font-weight:400;">18</div>
<div style="left:0px;top:637px;width:28px;height:1px;background:#bdbdbd"></div>
<div class="t" style="left:-286px;width:600px;text-align:center;top:642.07px;font-size:14px;color:#111;font-family:'Liberation Serif', serif;font-weight:400;">19</div>
<div style="left:0px;top:657px;width:28px;height:1px;background:#bdbdbd"></div>
<div class="t" style="left:-286px;width:600px;text-align:center;top:662.07px;font-size:14px;color:#111;font-family:'Liberation Serif', serif;font-weight:400;">20</div>
<div style="left:0px;top:677px;width:28px;height:1px;background:#bdbdbd"></div>
<div style="left:28px;top:196px;width:1px;height:482px;background:#9e9e9e"></div>
<div style="left:27px;top:311px;width:2px;height:131px;background:#217346"></div>
<div style="left:29px;top:215px;width:1315px;height:462px;background:#fff"></div>
<div style="left:430px;top:215px;width:64px;height:263px;background:#e7e6e6"></div>
<div style="left:29px;top:442px;width:401px;height:36px;background:#e7e6e6"></div>
<div style="left:28px;top:282px;width:402px;height:29px;background:#d9e1f2"></div>
<div style="left:28px;top:310px;width:402px;height:2px;background:#8eaadc"></div>
<div style="left:29px;top:337px;width:281px;height:1px;background:#8eaadc"></div>
<div style="left:29px;top:363px;width:281px;height:1px;background:#8eaadc"></div>
<div style="left:29px;top:389px;width:281px;height:1px;background:#8eaadc"></div>
<div style="left:29px;top:415px;width:281px;height:1px;background:#8eaadc"></div>
<div style="left:29px;top:441px;width:281px;height:1px;background:#8eaadc"></div>
<div class="t" style="left:31.5px;top:222.40px;font-size:24px;color:#44546a;font-family:'Liberation Serif', serif;font-weight:400;letter-spacing:0.1px">Bài tập thực hành - hàm DATEVALUE</div>
<div class="t" style="left:32.5px;top:262.34px;font-size:17.5px;color:#000;font-family:'Liberation Serif', serif;font-weight:400;letter-spacing:0.38px">Ghép các giá trị sau đây về dạng ngày tháng, thời gian</div>
<div class="t" style="right:1247px;top:292.68px;font-size:16.5px;color:#44546a;font-family:'Liberation Serif', serif;font-weight:700;">Ngày</div>
<div class="t" style="right:1153.5px;top:292.68px;font-size:16.5px;color:#44546a;font-family:'Liberation Serif', serif;font-weight:700;">Tháng</div>
<div class="t" style="right:1059.5px;top:292.68px;font-size:16.5px;color:#44546a;font-family:'Liberation Serif', serif;font-weight:700;">Năm</div>
<div class="t" style="right:939.5px;top:292.68px;font-size:16.5px;color:#44546a;font-family:'Liberation Serif', serif;font-weight:700;">Kết quả</div>
<div class="t" style="right:1247.5px;top:317.68px;font-size:16.5px;color:#000;font-family:'Liberation Serif', serif;font-weight:400;letter-spacing:0.5px">19</div>
<div class="t" style="right:1153.5px;top:317.68px;font-size:16.5px;color:#000;font-family:'Liberation Serif', serif;font-weight:400;letter-spacing:0.5px">2</div>
<div class="t" style="right:1059.5px;top:317.68px;font-size:16.5px;color:#000;font-family:'Liberation Serif', serif;font-weight:400;letter-spacing:0.5px">1982</div>
<div class="t" style="right:1247.5px;top:343.68px;font-size:16.5px;color:#000;font-family:'Liberation Serif', serif;font-weight:400;letter-spacing:0.5px">19</div>
<div class="t" style="right:1153.5px;top:343.68px;font-size:16.5px;color:#000;font-family:'Liberation Serif', serif;font-weight:400;letter-spacing:0.5px">8</div>
<div class="t" style="right:1059.5px;top:343.68px;font-size:16.5px;color:#000;font-family:'Liberation Serif', serif;font-weight:400;letter-spacing:0.5px">1994</div>
<div class="t" style="right:1247.5px;top:369.68px;font-size:16.5px;color:#000;font-family:'Liberation Serif', serif;font-weight:400;letter-spacing:0.5px">31</div>
<div class="t" style="right:1153.5px;top:369.68px;font-size:16.5px;color:#000;font-family:'Liberation Serif', serif;font-weight:400;letter-spacing:0.5px">3</div>
<div class="t" style="right:1059.5px;top:369.68px;font-size:16.5px;color:#000;font-family:'Liberation Serif', serif;font-weight:400;letter-spacing:0.5px">2004</div>
<div class="t" style="right:1247.5px;top:395.68px;font-size:16.5px;color:#000;font-family:'Liberation Serif', serif;font-weight:400;letter-spacing:0.5px">7</div>
<div class="t" style="right:1153.5px;top:395.68px;font-size:16.5px;color:#000;font-family:'Liberation Serif', serif;font-weight:400;letter-spacing:0.5px">12</div>
<div class="t" style="right:1059.5px;top:395.68px;font-size:16.5px;color:#000;font-family:'Liberation Serif', serif;font-weight:400;letter-spacing:0.5px">99</div>
<div class="t" style="right:1247.5px;top:421.68px;font-size:16.5px;color:#000;font-family:'Liberation Serif', serif;font-weight:400;letter-spacing:0.5px">14</div>
<div class="t" style="right:1153.5px;top:421.68px;font-size:16.5px;color:#000;font-family:'Liberation Serif', serif;font-weight:400;letter-spacing:0.5px">11</div>
<div class="t" style="right:1059.5px;top:421.68px;font-size:16.5px;color:#000;font-family:'Liberation Serif', serif;font-weight:400;letter-spacing:0.5px">0</div>
<div style="left:310px;top:311px;width:120px;height:130px;background:#bdbdbd"></div>
<div style="left:312px;top:312px;width:117px;height:25px;background:#f0f0f0"></div>
<div style="left:312px;top:337px;width:117px;height:1px;background:#6e6e6e"></div>
<div style="left:312px;top:363px;width:117px;height:1px;background:#6e6e6e"></div>
<div style="left:312px;top:389px;width:117px;height:1px;background:#6e6e6e"></div>
<div style="left:312px;top:415px;width:117px;height:1px;background:#6e6e6e"></div>
<div class="t" style="left:337px;top:317.68px;font-size:16.5px;color:#4472c4;font-family:'Liberation Serif', serif;font-weight:400;">#VALUE!</div>
<svg style="left:312px;top:312px;" width="6" height="6" viewBox="0 0 6 6"><path d="M0 0h5L0 5z" fill="#1e7a3c"/></svg>
<div class="t" style="left:337px;top:343.68px;font-size:16.5px;color:#3b5ea8;font-family:'Liberation Serif', serif;font-weight:400;">#VALUE!</div>
<svg style="left:312px;top:338px;" width="6" height="6" viewBox="0 0 6 6"><path d="M0 0h5L0 5z" fill="#1e7a3c"/></svg>
<div class="t" style="left:337px;top:369.68px;font-size:16.5px;color:#3b5ea8;font-family:'Liberation Serif', serif;font-weight:400;">#VALUE!</div>
<svg style="left:312px;top:364px;" width="6" height="6" viewBox="0 0 6 6"><path d="M0 0h5L0 5z" fill="#1e7a3c"/></svg>
<div class="t" style="right:939px;top:395.85px;font-size:16.3px;color:#3b5ea8;font-family:'Liberation Serif', serif;font-weight:400;letter-spacing:0.8px">07/12/1999</div>
<div class="t" style="left:337px;top:421.68px;font-size:16.5px;color:#3b5ea8;font-family:'Liberation Serif', serif;font-weight:400;">#VALUE!</div>
<svg style="left:312px;top:416px;" width="6" height="6" viewBox="0 0 6 6"><path d="M0 0h5L0 5z" fill="#1e7a3c"/></svg>
<div style="left:309px;top:310px;width:123px;height:133px;border:2px solid #217346"></div>
<div style="left:311px;top:312px;width:119px;height:129px;border:1px solid #fff"></div>
<div style="left:427px;top:438px;width:7px;height:7px;background:#fff"></div>
<div style="left:428px;top:439px;width:5px;height:5px;background:#217346"></div>
<svg style="left:432px;top:443px;" width="20" height="20" viewBox="0 0 20 20"><rect x="0.5" y="0.5" width="19" height="19" fill="#fff" stroke="#a8a8a8"/><rect x="3.5" y="3.5" width="12" height="4" fill="#fff" stroke="#8a8a8a"/><rect x="4" y="4" width="5.5" height="3" fill="#3a7cf5"/><path d="M9.5 3.5v4" stroke="#8a8a8a"/><rect x="3.5" y="7.5" width="6" height="4" fill="#fff" stroke="#8a8a8a"/><path d="M3 15h1v1H3zM5 15h1v1H5zM7 15h1v1H7zM9 15h1v1H9zM3 13h1v1H3zM9 13h1v1H9z" fill="#8a8a8a"/><path d="M14.5 11v5M12 13.5h5" stroke="#8a8a8a"/></svg>
<div style="left:1344px;top:214px;width:1px;height:464px;background:#9e9e9e"></div>
<div style="left:1345px;top:196px;width:21px;height:482px;background:#e6e6e6"></div>
<div style="left:1348px;top:198px;width:15px;height:15px;background:#fff;border:1px solid #bcbcbc"></div>
<svg style="left:1351px;top:203px;" width="9" height="5" viewBox="0 0 9 5"><path d="M0.5 4.5L4.5 0.5l4 4z" fill="#777"/></svg>
<div style="left:1348px;top:212px;width:15px;height:429px;background:#f0f0f0;border:1px solid #bcbcbc;border-top-width:2px"></div>
<div style="left:1348px;top:641px;width:15px;height:23px;background:#d6d6d6"></div>
<div style="left:1348px;top:664px;width:15px;height:15px;background:#fff;border:1px solid #bcbcbc"></div>
<svg style="left:1351px;top:669px;" width="9" height="5" viewBox="0 0 9 5"><path d="M0.5 0.5h8l-4 4z" fill="#777"/></svg>
<div style="left:0px;top:678px;width:1366px;height:28px;background:#e6e6e6"></div>
<div style="left:0px;top:678px;width:1366px;height:1px;background:#9e9e9e"></div>
<svg style="left:26px;top:687px;" width="6" height="9" viewBox="0 0 6 9"><path d="M5 0.5v8L0.5 4.5z" fill="#bcbcbc"/></svg>
<svg style="left:55px;top:687px;" width="6" height="9" viewBox="0 0 6 9"><path d="M1 0.5v8l4.5-4z" fill="#bcbcbc"/></svg>
<div style="left:100px;top:682px;width:1px;height:20px;background:#9e9e9e"></div>
<div class="t" style="left:112px;top:685.16px;font-size:12.8px;color:#444;font-family:'Liberation Sans', sans-serif;font-weight:400;">MENU</div>
<div style="left:162px;top:678px;width:63px;height:25px;background:#fff;border-left:1px solid #9e9e9e;border-right:1px solid #9e9e9e"></div>
<div style="left:162px;top:701px;width:63px;height:2px;background:#217346"></div>
<div class="t" style="left:174.6px;top:686.09px;font-size:12.3px;color:#217346;font-family:'Liberation Sans', sans-serif;font-weight:700;letter-spacing:-0.35px">Bai_01</div>
<div class="t" style="left:237px;top:686.27px;font-size:11.5px;color:#444;font-family:'Liberation Sans', sans-serif;font-weight:400;">Bai_02</div>
<div style="left:285px;top:682px;width:1px;height:20px;background:#9e9e9e"></div>
<svg style="left:318px;top:683px;" width="18" height="18" viewBox="0 0 18 18"><circle cx="9" cy="9" r="7.8" fill="none" stroke="#666" stroke-width="1.2"/><path d="M9 4.5v9M4.5 9h9" stroke="#666" stroke-width="1.5"/></svg>
<div style="left:819px;top:687.5px;width:2px;height:2px;background:#a6a6a6"></div>
<div style="left:819px;top:691.5px;width:2px;height:2px;background:#a6a6a6"></div>
<div style="left:819px;top:695.5px;width:2px;height:2px;background:#a6a6a6"></div>
<div style="left:836px;top:685px;width:15px;height:15px;background:#fff;border:1px solid #bcbcbc"></div>
<svg style="left:840px;top:688px;" width="6" height="9" viewBox="0 0 6 9"><path d="M4.5 0.5v8L0.5 4.5z" fill="#555"/></svg>
<div style="left:850px;top:685px;width:453px;height:15px;background:#fff;border:1px solid #bcbcbc"></div>
<div style="left:1303px;top:685px;width:27px;height:15px;background:#d6d6d6"></div>
<div style="left:1330px;top:685px;width:15px;height:15px;background:#fff;border:1px solid #bcbcbc"></div>
<svg style="left:1335px;top:688px;" width="6" height="9" viewBox="0 0 6 9"><path d="M1 0.5v8l4.5-4z" fill="#555"/></svg>
<div style="left:0px;top:706px;width:1366px;height:22px;background:#f1f1f1"></div>
<div style="left:0px;top:706px;width:1366px;height:1px;background:#d5d5d5"></div>
<div class="t" style="left:7.4px;top:712.19px;font-size:11px;color:#444;font-family:'Liberation Sans', sans-serif;font-weight:400;letter-spacing:-0.2px">Ready</div>
<div class="t" style="left:1011.5px;top:711.77px;font-size:11.5px;color:#444;font-family:'Liberation Sans', sans-serif;font-weight:400;">Count: 5</div>
<div style="left:1074px;top:707px;width:38px;height:21px;background:#c8c8c8"></div>
<svg style="left:1086px;top:711px;" width="14" height="13" viewBox="0 0 14 13"><path d="M0.5 0.5h13v12h-13zM0.5 4.5h13M0.5 8.5h13M4.5 0.5v12M9.5 0.5v12" fill="none" stroke="#555"/></svg>
<svg style="left:1124px;top:711px;" width="14" height="13" viewBox="0 0 14 13"><path d="M0.5 0.5h13v12h-13z" fill="none" stroke="#555"/><path d="M3.5 3.5h7v6h-7zM3.5 6.5h7" fill="none" stroke="#555"/></svg>
<svg style="left:1162px;top:711px;" width="14" height="13" viewBox="0 0 14 13"><path d="M0.5 0.5h13v12h-13zM0.5 6.5h5v-6M8.5 0.5v6h5" fill="none" stroke="#555"/></svg>
<div style="left:1193px;top:716px;width:6px;height:2px;background:#555"></div>
<div style="left:1204px;top:716.5px;width:98px;height:1px;background:#999"></div>
<div style="left:1251px;top:711px;width:4px;height:12px;background:#555"></div>
<div style="left:1306px;top:716px;width:10px;height:2px;background:#555"></div>
<div style="left:1310px;top:712px;width:2px;height:10px;background:#555"></div>
<div class="t" style="left:1330.5px;top:712.36px;font-size:10.8px;color:#444;font-family:'Liberation Sans', sans-serif;font-weight:400;">100%</div>
<div class="t" style="left:1073.5px;top:652.74px;font-size:19.8px;color:rgba(120,120,120,0.5);font-family:'Liberation Sans', sans-serif;font-weight:400;">Activate Windows</div>
<div class="t" style="left:1073.5px;top:677.39px;font-size:14.9px;color:rgba(120,120,120,0.5);font-family:'Liberation Sans', sans-serif;font-weight:400;">Go to Settings to activate Windows.</div>
<div style="left:0px;top:728px;width:1366px;height:40px;background:#26343a"></div>
<svg style="left:15px;top:739px;" width="19" height="18" viewBox="0 0 19 18"><path d="M1 2.6L7.3 1.8v6.4H1zM8.3 1.6L17 0.6v7.6H8.3zM1 9.2h6.3v6.4L1 14.8zM8.3 9.2H17v7.6L8.3 15.8z" fill="#fff"/></svg>
<svg style="left:62px;top:738px;" width="20" height="20" viewBox="0 0 20 20"><circle cx="12" cy="7.6" r="5.6" fill="none" stroke="#fff" stroke-width="1.3"/><path d="M8 11.6L2 17.6" stroke="#fff" stroke-width="1.4"/></svg>
<svg style="left:111px;top:740px;" width="18" height="17" viewBox="0 0 18 17"><circle cx="8.8" cy="8.2" r="6.4" fill="none" stroke="#fff" stroke-width="2.1"/></svg>
<svg style="left:158px;top:739px;" width="20" height="18" viewBox="0 0 20 18"><path d="M2 1.6h11.5M2.6 1v2.6M12.9 1v2.6M2 15.4h11.5M2.6 13v2.6M12.9 13v2.6M16.6 1v2.8M16.6 9.5v6.6" fill="none" stroke="#fff" stroke-width="1.2"/><rect x="2.6" y="5" width="10.3" height="7" fill="none" stroke="#fff" stroke-width="1.3"/><rect x="15.1" y="5" width="3" height="3" fill="#fff"/></svg>
<svg style="left:206px;top:735px;" width="25" height="26" viewBox="0 0 25 26"><path d="M6.8 7V3a1.8 1.8 0 0 1 1.8-1.8h6.8A1.8 1.8 0 0 1 17.2 3v4" fill="none" stroke="#e9e9e9" stroke-width="1.6"/><rect x="1" y="7" width="23" height="18" fill="#f2f2f2"/><rect x="1" y="7" width="23" height="2" fill="#d8d8d8"/><rect x="8" y="12" width="4.3" height="4.3" fill="#f25022"/><rect x="13" y="12" width="4.3" height="4.3" fill="#7fba00"/><rect x="8" y="17" width="4.3" height="4.3" fill="#00a4ef"/><rect x="13" y="17" width="4.3" height="4.3" fill="#ffb900"/></svg>
<svg style="left:255px;top:735px;" width="27" height="26" viewBox="0 0 27 26"><defs><linearGradient id="eg1" x1="0" y1="0" x2="1" y2="1"><stop offset="0" stop-color="#1fb3e8"/><stop offset="1" stop-color="#5fd65a"/></linearGradient><linearGradient id="eg2" x1="0" y1="0" x2="0" y2="1"><stop offset="0" stop-color="#1a8ad8"/><stop offset="1" stop-color="#0b5cb8"/></linearGradient></defs><path d="M13 1a12 12 0 0 1 12 11.5c0 3.5-3 5-6 5-2.5 0-4-1-3.8-2.5.2-1.2 1-1.8 1-3.5C16.2 8 12 5.5 7.5 7 4 8.2 1.2 11 1.2 14 1 7 6.5 1 13 1z" fill="url(#eg1)"/><path d="M1.2 14c0-3.8 3.5-7 7.8-7 3.4 0 5.7 2 5.7 4.6 0 1-.5 1.5-.5 2.3 0 2.2 2.7 3.2 5.2 3.2 1.8 0 3.5-.6 4.6-1.3C22 21.6 17.8 25 13 25 6.5 25 1.2 20.5 1.2 14z" fill="url(#eg2)"/><path d="M9 7.2c-3.3 1.2-5 4.3-5 7.5 0 4.3 3.3 8.3 7.7 9.5C6 24 1.2 19.8 1.2 14 1.2 10.3 4.5 7.2 9 7.2z" fill="#2f9ae0"/><circle cx="13.5" cy="12.5" r="2.2" fill="#26343a"/></svg>
<div style="left:297px;top:765px;width:40px;height:3px;background:#76b9ed"></div>
<svg style="left:305px;top:738px;" width="24" height="20" viewBox="0 0 24 20"><path d="M1 1.5h9l1.5 2H1z" fill="#e3a21a"/><rect x="1" y="3.5" width="22" height="15" fill="#fbd26a"/><rect x="1" y="5" width="22" height="13.5" fill="#f8c95a"/><path d="M5 18.5V11h14v7.5h-5v-4h-4v4z" fill="#3d9ae2"/></svg>
<div style="left:346px;top:765px;width:40px;height:3px;background:#76b9ed"></div>
<svg style="left:354px;top:736px;" width="24" height="24" viewBox="0 0 24 24"><defs><linearGradient id="cg" x1="0" y1="0" x2="1" y2="0.3"><stop offset="0" stop-color="#9ccb3b"/><stop offset="1" stop-color="#46b65c"/></linearGradient></defs><circle cx="11.7" cy="12.1" r="10.9" fill="#fff"/><path d="M15.43 1.86L22.5 1L21.94 8.37z" fill="#fff"/><path d="M11.7 12.1L21.65 10.34A10.1 10.1 0 1 1 12.58 2.04z" fill="url(#cg)"/><path d="M11.7 12.1L16.39 3.27 21.3 2.1 18.77 5.03z" fill="#4cb85a"/><path d="M12.74 6.19L13.35 2.74M17.14 9.56L20.31 8.08" stroke="#ea5a3c" stroke-width="1.7"/><circle cx="11.7" cy="12.1" r="4.9" fill="#fff"/><circle cx="11.7" cy="12.1" r="3.4" fill="#74bf45"/></svg>
<div style="left:391px;top:728px;width:48px;height:40px;background:#525e67"></div>
<div style="left:391px;top:765px;width:48px;height:3px;background:#76b9ed"></div>
<svg style="left:402px;top:736px;" width="26" height="24" viewBox="0 0 26 24"><rect x="13" y="3.5" width="11" height="16" fill="#fff"/><path d="M15 6.5h7.5M15 9.5h7.5M15 12.5h7.5M15 15.5h7.5M18.5 4v15" stroke="#1e7145" stroke-width="0.9"/><path d="M1.5 2.5L15 0.6v22.6L1.5 21z" fill="#1d6f42"/><path d="M4.8 7.5h2.4l1.6 3 1.6-3h2.3l-2.6 4.3 2.7 4.5H10.4l-1.7-3.1-1.7 3.1H4.7l2.8-4.5z" fill="#fff"/></svg>
<svg style="left:926px;top:739px;" width="24" height="19" viewBox="0 0 24 19"><circle cx="6.8" cy="6.2" r="4.6" fill="#f6c445"/><path d="M5 17h13.6a3.9 3.9 0 0 0 .4-7.8 5.3 5.3 0 0 0-10.2-1.3A4.6 4.6 0 0 0 5 17z" fill="#e4f1fe" stroke="#c6def5" stroke-width="0.6"/><path d="M13.5 9.8l-1.6 2.9a1.7 1.7 0 0 0 3.2 0z" fill="#3c8fe8"/><path d="M9.3 12.8l-1.6 2.9a1.7 1.7 0 0 0 3.2 0z" fill="#3c8fe8"/></svg>
<div class="t" style="left:958.3px;top:743.14px;font-size:13.3px;color:#fff;font-family:'Liberation Sans', sans-serif;font-weight:400;">30°C</div>
<div class="t" style="left:996.5px;top:743.23px;font-size:13.2px;color:#fff;font-family:'Liberation Sans', sans-serif;font-weight:400;">Rain showers</div>
<svg style="left:1092px;top:743px;" width="15" height="9" viewBox="0 0 15 9"><path d="M1 8L7.2 1.5 13.5 8" fill="none" stroke="#fff" stroke-width="1.3"/></svg>
<svg style="left:1117px;top:742px;" width="15" height="14" viewBox="0 0 15 14"><path d="M1.5 12.5A10.5 10.5 0 0 1 12 2M4 12.5a8 8 0 0 1 8-8M6.5 12.5A5.5 5.5 0 0 1 12 7M9 12.5a3 3 0 0 1 3-3" fill="none" stroke="#fff" stroke-width="1.1"/><circle cx="12" cy="12.3" r="1.4" fill="#fff"/></svg>
<svg style="left:1138px;top:741px;" width="18" height="14" viewBox="0 0 18 14"><path d="M1 4.5h3L8 1v12L4 9.5H1z" fill="none" stroke="#fff" stroke-width="1.1"/><path d="M10.5 5a3 3 0 0 1 0 4M12.8 3a6 6 0 0 1 0 8" fill="none" stroke="#fff" stroke-width="1.1"/><path d="M15 1.5a9 9 0 0 1 0 11" fill="none" stroke="#888" stroke-width="1"/></svg>
<svg style="left:1163px;top:743px;" width="17" height="10" viewBox="0 0 17 10"><rect x="1" y="1" width="13.5" height="8" fill="none" stroke="#fff" stroke-width="1.2"/><rect x="2.8" y="2.8" width="3" height="4.4" fill="#fff"/><rect x="15" y="3.5" width="1.6" height="3" fill="#fff"/></svg>
<svg style="left:1186px;top:740px;" width="18" height="16" viewBox="0 0 18 16"><defs><linearGradient id="ug" x1="0" y1="0" x2="1" y2="1"><stop offset="0" stop-color="#d6e8ff"/><stop offset="1" stop-color="#8fb6ec"/></linearGradient></defs><rect x="0.5" y="0.5" width="16.5" height="15.5" fill="url(#ug)" stroke="#7d9fd8"/><path d="M12.3 4.2C11.4 3.3 10.2 2.9 9 2.9 6.4 2.9 4.7 5.2 4.7 8s1.7 5.1 4.3 5.1c1.3 0 2.4-.5 3.3-1.3M5.2 8h5.5" fill="none" stroke="#47399a" stroke-width="1.9"/></svg>
<div class="t" style="left:1213.6px;top:742.89px;font-size:11px;color:#fff;font-family:'Liberation Sans', sans-serif;font-weight:400;">ENG</div>
<div class="t" style="left:1257.7px;top:733.65px;font-size:11.4px;color:#fff;font-family:'Liberation Sans', sans-serif;font-weight:400;">1:47 PM</div>
<div class="t" style="left:1249px;top:751.38px;font-size:11.6px;color:#fff;font-family:'Liberation Sans', sans-serif;font-weight:400;">08/15/2021</div>
<svg style="left:1323px;top:739px;" width="28" height="25" viewBox="0 0 28 25"><path d="M2 1h15.5v13H10l-3 3v-3H2z" fill="#fff"/><path d="M5 4.5h10M5 7h10M5 9.5h10" stroke="#444" stroke-width="1"/><circle cx="17.6" cy="16.2" r="7.6" fill="#2a2a2a" stroke="#777" stroke-width="1"/><text x="13.8" y="20.4" font-family="Liberation Sans" font-size="11.5" font-weight="700" fill="#fff">2</text></svg>
<div style="left:1361px;top:728px;width:1px;height:40px;background:#5a6570"></div>
</body></html>
